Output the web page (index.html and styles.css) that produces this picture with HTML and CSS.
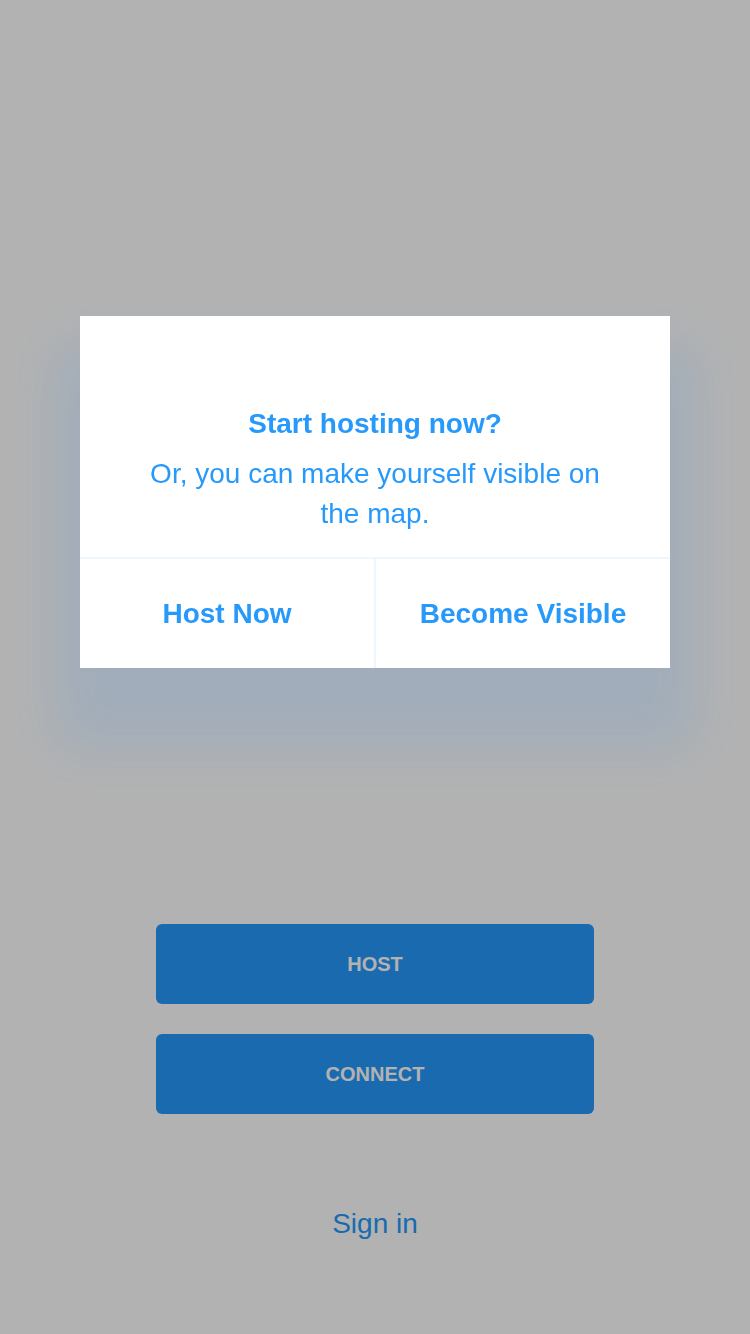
FILE: index.html
```html
<!DOCTYPE html>
<html>
<head>
<meta charset="utf-8">
<link rel="stylesheet" href="styles.css">
</head>
<body>
<main class="page">
  <div class="actions">
    <button class="primary">HOST</button>
    <button class="primary">CONNECT</button>
    <a class="signin">Sign in</a>
  </div>
</main>
<div class="overlay">
  <div class="modal">
    <div class="modal-body">
      <h2 class="modal-title">Start hosting now?</h2>
      <p class="modal-text">Or, you can make yourself visible on the map.</p>
    </div>
    <div class="modal-buttons">
      <button class="modal-btn">Host Now</button>
      <button class="modal-btn">Become Visible</button>
    </div>
  </div>
</div>
</body>
</html>
```

FILE: styles.css
```css
* { box-sizing: border-box; }
html, body { margin: 0; padding: 0; }
body {
  width: 750px;
  height: 1334px;
  background: #ffffff;
  font-family: "Liberation Sans", Arial, sans-serif;
  overflow: hidden;
}
.page {
  height: 1334px;
  padding-top: 924px;
}
.actions {
  display: flex;
  flex-direction: column;
  align-items: center;
}
.primary {
  width: 438px;
  height: 80px;
  border: 0;
  border-radius: 6px;
  background: #2699fb;
  color: #ffffff;
  font-family: "Liberation Sans", Arial, sans-serif;
  font-weight: bold;
  font-size: 20px;
  margin-bottom: 30px;
  padding: 0;
}
.signin {
  margin-top: 60px;
  font-size: 28px;
  line-height: 40px;
  color: #2699fb;
}
.overlay {
  position: fixed;
  inset: 0;
  background: rgba(0, 0, 0, 0.3);
  display: flex;
  flex-direction: column;
  align-items: center;
  padding-top: 316px;
}
.modal {
  width: 590px;
  background: #ffffff;
  box-shadow: 0 55px 50px 25px rgba(70, 145, 225, 0.16);
}
.modal-body {
  padding: 88px 60px 23px;
  text-align: center;
  color: #2699fb;
}
.modal-title {
  margin: 0;
  font-size: 28px;
  line-height: 40px;
  font-weight: bold;
}
.modal-text {
  margin: 10px 0 0;
  font-size: 28px;
  line-height: 40px;
}
.modal-buttons {
  display: flex;
  border-top: 2px solid #eef6fe;
}
.modal-btn {
  flex: 1;
  height: 109px;
  border: 0;
  background: #ffffff;
  color: #2699fb;
  font-family: "Liberation Sans", Arial, sans-serif;
  font-weight: bold;
  font-size: 28px;
  padding: 0;
}
.modal-btn + .modal-btn {
  border-left: 2px solid #eef6fe;
}
```
